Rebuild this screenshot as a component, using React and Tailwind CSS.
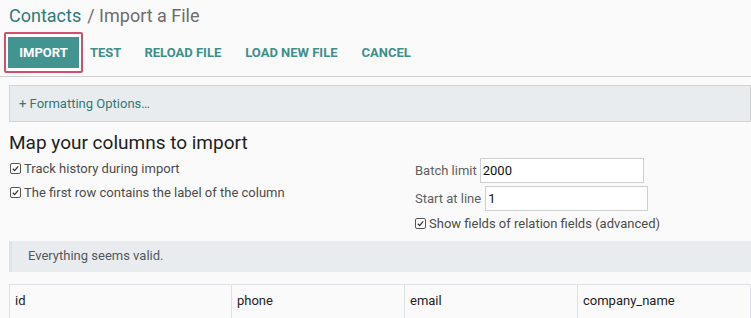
import React from "react"

function Check({ label }) {
  return (
    <label className="flex items-center gap-[3px] text-[13px] text-[#4c4c4c]">
      <span className="flex h-[11px] w-[11px] items-center justify-center rounded-[2px] border border-[#555] bg-white">
        <svg viewBox="0 0 10 10" className="h-[9px] w-[9px]">
          <path d="M2 5.2 L4.1 7.3 L8 2.6" fill="none" stroke="#333" strokeWidth="1.4" />
        </svg>
      </span>
      {label}
    </label>
  )
}

export default function App() {
  const columns = [
    { name: "id", w: "w-[222px]" },
    { name: "phone", w: "w-[173px]" },
    { name: "email", w: "w-[173px]" },
    { name: "company_name", w: "flex-1" },
  ]

  return (
    <div className="h-[318px] w-[751px] overflow-hidden bg-[#fafafa] font-['Roboto',sans-serif]">
      {/* breadcrumb */}
      <div className="flex h-[29px] items-center pl-[9px] pt-[3px] text-[18px] leading-none">
        <span className="text-[#2d7a78]">Contacts</span>
        <span className="ml-[6px] text-[#6d6d6d]">/ Import a File</span>
      </div>

      {/* buttons */}
      <div className="flex h-[48px] items-center border-b border-[#cfcfcf] pl-[4px] text-[13px] font-bold">
        <div className="rounded-[2px] border-2 border-[#d24f6b] bg-white px-[2px] py-[3px]">
          <button className="block h-[31px] w-[71px] bg-[#41948f] uppercase text-white">
            Import
          </button>
        </div>
        <button className="ml-[7px] uppercase text-[#3d8f8b]">Test</button>
        <button className="ml-[23px] uppercase text-[#3d8f8b]">Reload File</button>
        <button className="ml-[24px] uppercase text-[#3d8f8b]">Load New File</button>
        <button className="ml-[24px] uppercase text-[#3d8f8b]">Cancel</button>
      </div>

      {/* formatting options */}
      <div className="ml-[9px] mt-[8px] flex h-[37px] items-center border border-[#d4d4d4] bg-[#e9ecef] pl-[9px] text-[13px] text-[#2d7a78]">
        + Formatting Options…
      </div>

      <h2 className="mt-[9px] pl-[9px] text-[19px] leading-[24px] text-[#222]">
        Map your columns to import
      </h2>

      <div className="flex pl-[10px]">
        <div className="flex w-[405px] flex-col gap-[4px] pt-[4px]">
          <Check label="Track history during import" />
          <Check label="The first row contains the label of the column" />
        </div>
        <div className="flex flex-col pt-[3px] text-[13px] text-[#5f5f5f]">
          <div className="flex items-center">
            <span>Batch limit</span>
            <input
              readOnly
              value="2000"
              className="ml-[3px] h-[25px] w-[164px] border border-[#cfcfcf] bg-white px-[2px] text-[13px] text-[#111] outline-none"
            />
          </div>
          <div className="mt-[3px] flex items-center">
            <span>Start at line</span>
            <input
              readOnly
              value="1"
              className="ml-[4px] h-[25px] w-[163px] border border-[#cfcfcf] bg-white px-[2px] text-[13px] text-[#111] outline-none"
            />
          </div>
          <div className="mt-[3px]">
            <Check label="Show fields of relation fields (advanced)" />
          </div>
        </div>
      </div>

      {/* status */}
      <div className="ml-[9px] mt-[7px] flex h-[31px] items-center border-l-[3px] border-[#dbe4e6] bg-[#e9ecef] pl-[16px] text-[13px] text-[#505a5e]">
        Everything seems valid.
      </div>

      {/* table */}
      <div className="ml-[9px] mt-[12px] flex border-l border-t border-[#dee2e6] text-[13px] text-[#222]">
        {columns.map((c) => (
          <div key={c.name} className={`${c.w} h-[40px] border-r border-[#dee2e6] pl-[5px] pt-[6px]`}>
            {c.name}
          </div>
        ))}
      </div>
    </div>
  )
}
